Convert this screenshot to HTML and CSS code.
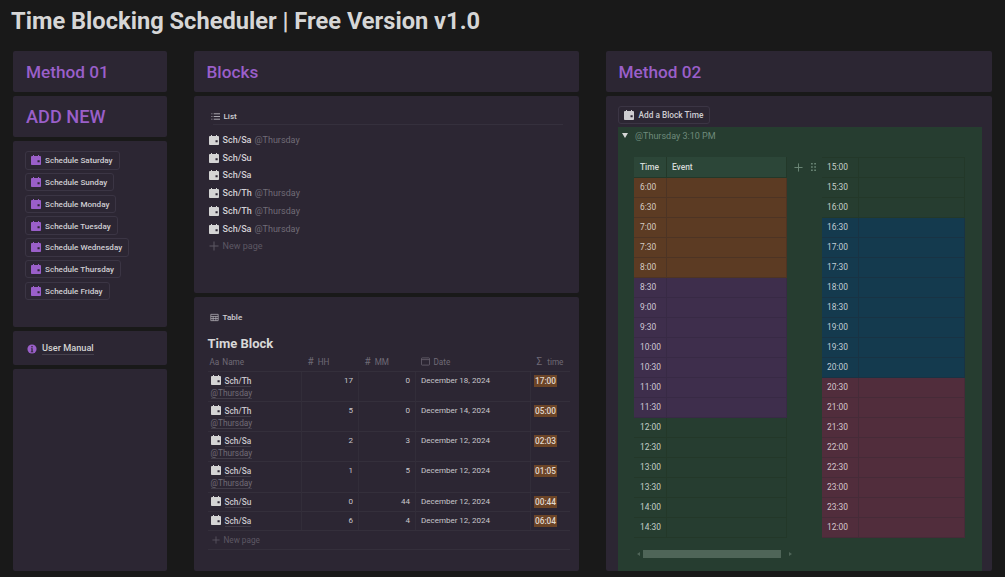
FILE: index.html
```html
<!DOCTYPE html>
<html lang="en">
<head>
<meta charset="utf-8">
<title>Time Blocking Scheduler</title>
<link rel="stylesheet" href="styles.css">
</head>
<body>
<svg class="defs" width="0" height="0" aria-hidden="true">
  <symbol id="cal" viewBox="0 0 12 12"><path fill="currentColor" fill-rule="evenodd" d="M2.4 0h1.2v1.2h4.8V0h1.2v1.2h1.1c.7 0 1.3.6 1.3 1.3v8.2c0 .7-.6 1.3-1.3 1.3H1.3C.6 12 0 11.4 0 10.700V2.500C0 1.800.6 1.200 1.300 1.200h1.100zM7.800 6.200v2.600h2.600V6.200z"/></symbol>
  <symbol id="plus" viewBox="0 0 10 10"><path fill="none" stroke="currentColor" stroke-width="1" d="M5 .5v9M.5 5h9"/></symbol>
</svg>
<h1 class="title">Time Blocking Scheduler | Free Version v1.0</h1>
<main class="columns">
  <section class="col">
    <div class="card head"><h2>Method 01</h2></div>
    <div class="card head"><h2 class="big">ADD NEW</h2></div>
    <div class="card buttons">
      <a class="btn"><svg class="ic"><use href="#cal"/></svg>Schedule Saturday</a>
      <a class="btn"><svg class="ic"><use href="#cal"/></svg>Schedule Sunday</a>
      <a class="btn"><svg class="ic"><use href="#cal"/></svg>Schedule Monday</a>
      <a class="btn"><svg class="ic"><use href="#cal"/></svg>Schedule Tuesday</a>
      <a class="btn"><svg class="ic"><use href="#cal"/></svg>Schedule Wednesday</a>
      <a class="btn"><svg class="ic"><use href="#cal"/></svg>Schedule Thursday</a>
      <a class="btn"><svg class="ic"><use href="#cal"/></svg>Schedule Friday</a>
    </div>
    <div class="card manual">
      <svg class="info" viewBox="0 0 12 12"><circle cx="6" cy="6" r="5.500" fill="#9a5fc9"/><circle cx="6" cy="3.300" r="1" fill="#2c2633"/><path d="M4.700 5h2.100v3.900h.7v.9H4.500v-.9h.8V5.800h-.6z" fill="#2c2633"/></svg>
      <span class="manual-text">User Manual</span>
    </div>
    <div class="card fill"></div>
  </section>

  <section class="col">
    <div class="card head"><h2>Blocks</h2></div>
    <div class="card list">
      <div class="tab">
        <svg class="tab-ic" viewBox="0 0 10 10"><path fill="none" stroke="currentColor" d="M3 2h7M3 5h7M3 8h7M.5 2h1M.5 5h1M.5 8h1"/></svg>List
      </div>
      <div class="row"><svg class="ic"><use href="#cal"/></svg><b>Sch/Sa</b><span class="dim">@Thursday</span></div>
      <div class="row"><svg class="ic"><use href="#cal"/></svg><b>Sch/Su</b></div>
      <div class="row"><svg class="ic"><use href="#cal"/></svg><b>Sch/Sa</b></div>
      <div class="row"><svg class="ic"><use href="#cal"/></svg><b>Sch/Th</b><span class="dim">@Thursday</span></div>
      <div class="row"><svg class="ic"><use href="#cal"/></svg><b>Sch/Th</b><span class="dim">@Thursday</span></div>
      <div class="row"><svg class="ic"><use href="#cal"/></svg><b>Sch/Sa</b><span class="dim">@Thursday</span></div>
      <div class="row new"><svg class="ic"><use href="#plus"/></svg>New page</div>
    </div>
    <div class="card db">
      <div class="tab">
        <svg class="tab-ic" viewBox="0 0 10 10"><path fill="none" stroke="currentColor" stroke-width=".8" d="M.9 1.500h8.200v7H.9zM.9 3.800h8.200M.9 6.200h8.200M3.500 3.800v4.700M6.500 3.800v4.700"/></svg>Table
      </div>
      <h3>Time Block</h3>
      <table class="data">
        <thead>
          <tr>
            <th class="c-name"><span class="aa">Aa</span>Name</th>
            <th class="c-num"><span class="hash">#</span>HH</th>
            <th class="c-num"><span class="hash">#</span>MM</th>
            <th class="c-date"><svg class="date-ic" viewBox="0 0 10 10"><path fill="none" stroke="currentColor" stroke-width=".8" d="M1.300 1h7.400q.8 0 .8.800v6.400q0 .8-.8.800H1.300q-.8 0-.8-.8V1.800q0-.8.800-.8zM.5 2.900h9"/></svg>Date</th>
            <th class="c-time"><span class="sigma">Σ</span>time</th>
          </tr>
        </thead>
        <tbody>
          <tr class="tall"><td><svg class="ic"><use href="#cal"/></svg><u>Sch/Th</u><br><u class="dim">@Thursday</u></td><td class="n">17</td><td class="n">0</td><td>December 18, 2024</td><td><span class="pill">17:00</span></td></tr>
          <tr class="tall"><td><svg class="ic"><use href="#cal"/></svg><u>Sch/Th</u><br><u class="dim">@Thursday</u></td><td class="n">5</td><td class="n">0</td><td>December 14, 2024</td><td><span class="pill">05:00</span></td></tr>
          <tr class="tall"><td><svg class="ic"><use href="#cal"/></svg><u>Sch/Sa</u><br><u class="dim">@Thursday</u></td><td class="n">2</td><td class="n">3</td><td>December 12, 2024</td><td><span class="pill">02:03</span></td></tr>
          <tr class="tall"><td><svg class="ic"><use href="#cal"/></svg><u>Sch/Sa</u><br><u class="dim">@Thursday</u></td><td class="n">1</td><td class="n">5</td><td>December 12, 2024</td><td><span class="pill">01:05</span></td></tr>
          <tr><td><svg class="ic"><use href="#cal"/></svg><u>Sch/Su</u></td><td class="n">0</td><td class="n">44</td><td>December 12, 2024</td><td><span class="pill">00:44</span></td></tr>
          <tr><td><svg class="ic"><use href="#cal"/></svg><u>Sch/Sa</u></td><td class="n">6</td><td class="n">4</td><td>December 12, 2024</td><td><span class="pill">06:04</span></td></tr>
        </tbody>
      </table>
      <div class="new-row"><svg class="ic"><use href="#plus"/></svg>New page</div>
    </div>
  </section>

  <section class="col">
    <div class="card head"><h2>Method 02</h2></div>
    <div class="card method">
      <a class="btn add"><svg class="ic"><use href="#cal"/></svg>Add a Block Time</a>
      <div class="callout">
        <div class="toggle"><span class="tri"></span><span>@Thursday 3:10 PM</span></div>
        <div class="tables">
          <div class="sheet left">
            <div class="tr hd"><span>Time</span><span>Event</span></div>
            <div class="tr brown"><span>6:00</span><span></span></div>
            <div class="tr brown"><span>6:30</span><span></span></div>
            <div class="tr brown"><span>7:00</span><span></span></div>
            <div class="tr brown"><span>7:30</span><span></span></div>
            <div class="tr brown"><span>8:00</span><span></span></div>
            <div class="tr purple"><span>8:30</span><span></span></div>
            <div class="tr purple"><span>9:00</span><span></span></div>
            <div class="tr purple"><span>9:30</span><span></span></div>
            <div class="tr purple"><span>10:00</span><span></span></div>
            <div class="tr purple"><span>10:30</span><span></span></div>
            <div class="tr purple"><span>11:00</span><span></span></div>
            <div class="tr purple"><span>11:30</span><span></span></div>
            <div class="tr"><span>12:00</span><span></span></div>
            <div class="tr"><span>12:30</span><span></span></div>
            <div class="tr"><span>13:00</span><span></span></div>
            <div class="tr"><span>13:30</span><span></span></div>
            <div class="tr"><span>14:00</span><span></span></div>
            <div class="tr"><span>14:30</span><span></span></div>
          </div>
          <div class="handles">
            <svg class="h-plus"><use href="#plus"/></svg>
            <svg class="h-grip" viewBox="0 0 6 10"><path fill="currentColor" d="M0 0h2v2H0zM4 0h2v2H4zM0 4h2v2H0zM4 4h2v2H4zM0 8h2v2H0zM4 8h2v2H4z"/></svg>
          </div>
          <div class="sheet right">
            <div class="tr"><span>15:00</span><span></span></div>
            <div class="tr"><span>15:30</span><span></span></div>
            <div class="tr"><span>16:00</span><span></span></div>
            <div class="tr blue"><span>16:30</span><span></span></div>
            <div class="tr blue"><span>17:00</span><span></span></div>
            <div class="tr blue"><span>17:30</span><span></span></div>
            <div class="tr blue"><span>18:00</span><span></span></div>
            <div class="tr blue"><span>18:30</span><span></span></div>
            <div class="tr blue"><span>19:00</span><span></span></div>
            <div class="tr blue"><span>19:30</span><span></span></div>
            <div class="tr blue"><span>20:00</span><span></span></div>
            <div class="tr red"><span>20:30</span><span></span></div>
            <div class="tr red"><span>21:00</span><span></span></div>
            <div class="tr red"><span>21:30</span><span></span></div>
            <div class="tr red"><span>22:00</span><span></span></div>
            <div class="tr red"><span>22:30</span><span></span></div>
            <div class="tr red"><span>23:00</span><span></span></div>
            <div class="tr red"><span>23:30</span><span></span></div>
            <div class="tr red"><span>12:00</span><span></span></div>
          </div>
        </div>
        <div class="scroll"><span class="arr l"></span><span class="thumb"></span><span class="arr r"></span></div>
      </div>
    </div>
  </section>
</main>
</body>
</html>
```
FILE: styles.css
```css
* { box-sizing: border-box; }
html, body { margin: 0; height: 577px; overflow: hidden; }
body {
  background: #191919;
  color: #d4d4d4;
  font-family: Roboto, "Noto Sans", sans-serif;
  padding: 0 13px 6px;
  display: flex;
  flex-direction: column;
}
.defs { position: absolute; }
.title {
  margin: 0 0 0 -2px;
  height: 51px;
  padding-top: 4px;
  font-size: 23.650px;
  line-height: 34px;
  font-weight: 700;
  color: #d6d6d6;
  white-space: nowrap;
}
.columns {
  flex: 1;
  min-height: 0;
  display: grid;
  grid-template-columns: 154px 385.500px 386.500px;
  column-gap: 26.500px;
}
.col { display: flex; flex-direction: column; gap: 4px; min-height: 0; }
.card { background: #2c2633; border-radius: 2px; }
.head { height: 41px; padding-left: 13px; display: flex; align-items: center; }
.head h2 { margin: 0; font-size: 17.200px; font-weight: 500; color: #9a5fc9; line-height: 24px; }
.head h2.big { font-size: 18.200px; }

.ic { width: 10px; height: 10px; flex: none; }
.buttons {
  height: 186px;
  padding: 10px 12px;
  display: flex;
  flex-direction: column;
  align-items: flex-start;
  gap: 3.250px;
}
.btn {
  height: 18.500px;
  display: flex;
  align-items: center;
  gap: 4px;
  padding: 0 6px 0 5px;
  border: 1px solid #3b3544;
  border-radius: 3px;
  font-size: 8.100px;
  font-weight: 500;
  color: #cfcdd2;
  white-space: nowrap;
}
.buttons .ic { color: #9a5fc9; }
.manual { height: 34px; display: flex; align-items: center; padding: 1px 0 0 14px; gap: 5px; }
.info { width: 10px; height: 10px; }
.manual-text { font-size: 9.200px; font-weight: 500; color: #d4d4d4; border-bottom: 1px solid #45404c; line-height: 12px; }
.fill { flex: 1; }

.list { height: 197px; padding: 12px 12px 0 15px; }
.tab {
  display: flex;
  align-items: center;
  gap: 4px;
  height: 16px;
  padding-left: 2px;
  font-size: 8.100px;
  font-weight: 500;
  color: #cfcdd2;
}
.tab-ic { width: 9px; height: 9px; color: #b9b6bd; }
.list .tab { box-shadow: 0 5px 0 -4px #35303d; }
.row {
  display: flex;
  align-items: center;
  height: 17.750px;
  font-size: 9px;
  gap: 4px;
  white-space: nowrap;
}
.list .tab + .row { margin-top: 7px; }
.row b { font-weight: 500; color: #d2d0d5; }
.row .dim { margin-left: -1px; }
.dim { color: #716c77; font-weight: 400; }
.row.new { color: #5d5864; }

.db { flex: 1; min-height: 0; padding: 12px 10px 0 14px; }
.db h3 { margin: 10px 0 0 0; font-size: 13px; font-weight: 700; line-height: 18px; color: #d8d8d8; }
.data { width: 362px; border-collapse: collapse; table-layout: fixed; font-size: 8px; }
.data th {
  height: 18px;
  padding: 0 0 0 2px;
  text-align: left;
  font-weight: 400;
  color: #6f6a76;
  font-size: 8.200px;
  white-space: nowrap;
}
.c-name { width: 94px; }
.c-num { width: 57px; padding-left: 6px !important; }
.c-date { width: 115px; padding-left: 5px !important; }
.c-time { padding-left: 6px !important; }
.aa { margin-right: 3px; }
.hash { font-size: 10px; margin-right: 4px; }
.sigma { font-size: 10px; margin-right: 5px; }
.date-ic { width: 9px; height: 9px; margin-right: 4px; vertical-align: -1px; }
.data td {
  border-top: 1px solid #342f3b;
  border-left: 1px solid #322d39;
  padding: 3px 5px 0 5px;
  vertical-align: top;
  height: 19.300px;
  line-height: 12px;
  color: #c9c7cc;
  white-space: nowrap;
}
.data tr.tall td { height: 30.300px; }
.data td:first-child { border-left: 0; padding-left: 3px; font-weight: 500; font-size: 8.300px; }
.data td:last-child { padding-left: 3px; }
.data tbody tr:last-child td { border-bottom: 1px solid #342f3b; }
.data u { text-decoration: none; border-bottom: 1px solid #413c48; }
.data .ic { vertical-align: -1px; margin: -2px 4px 0 0; color: #d4d4d4; }
.n { text-align: right; }
.pill { display: inline-block; background: #6b4427; padding: 0 1px; font-weight: 500; color: #e0d8cf; line-height: 12px; font-size: 8.300px; }
.new-row { display: flex; align-items: center; gap: 4px; height: 19px; padding-left: 4px; font-size: 8.200px; color: #5d5864; border-bottom: 1px solid #342f3b; width: 362px; }
.new-row .ic { width: 8px; height: 8px; }

.method { flex: 1; min-height: 0; padding: 10px 10px 0 12px; display: flex; flex-direction: column; }
.add { align-self: flex-start; margin-bottom: 3px; height: 18px; gap: 5px; padding: 0 6px 0 5px; font-size: 8.300px; }
.callout { flex: 1; min-height: 0; background: #263d30; padding: 0 0 0 16.500px; }
.toggle { margin-left: -12px; padding-top: 1px; display: flex; align-items: center; gap: 7px; height: 16px; font-size: 9px; color: #6f8b7b; }
.tri { width: 0; height: 0; border-left: 3.500px solid transparent; border-right: 3.500px solid transparent; border-top: 5px solid #d6d6d6; }
.tables { display: flex; align-items: flex-start; margin-top: 14px; }
.sheet { display: flex; flex-direction: column; }
.left { width: 153px; }
.right { width: 143px; border-top: 1px solid #233829; }
.handles { width: 35px; height: 20px; display: flex; align-items: center; gap: 8px; padding-left: 7px; color: #6f8b7b; }
.h-plus { width: 9px; height: 9px; }
.h-grip { width: 5px; height: 8px; }
.tr {
  height: 20px;
  display: grid;
  grid-template-columns: 32px 1fr;
  border-bottom: 1px solid #233829;
  border-right: 1px solid #233829;
  font-size: 8.400px;
  line-height: 19px;
  color: #c4cfc8;
}
.right .tr { grid-template-columns: 36px 1fr; }
.tr span { padding-left: 5px; border-left: 1px solid transparent; }
.right .tr span { padding-left: 4px; }
.tr span + span { border-left: 1px solid #233829; }
.hd { background: #2c4638; height: 21px; font-weight: 500; line-height: 20px; color: #d4d9d6; }
.brown { background: #5c3b23; border-color: #4d3424; color: #d6cbc2; }
.brown span + span { border-left-color: #4d3424; }
.purple { background: #3e2e4c; border-color: #382a45; color: #cfc8d6; }
.purple span + span { border-left-color: #382a45; }
.blue { background: #143a4e; border-color: #183344; color: #c0cdd4; }
.blue span + span { border-left-color: #183344; }
.red { background: #512d3c; border-color: #462b38; color: #d6c6cc; }
.red span + span { border-left-color: #462b38; }
.scroll { display: flex; align-items: center; height: 8px; margin: 12px 0 0 3px; width: 155px; gap: 3px; }
.thumb { width: 139px; height: 8px; background: #4f6558; }
.arr { width: 0; height: 0; border-top: 2.500px solid transparent; border-bottom: 2.500px solid transparent; }
.arr.l { border-right: 3px solid #4f6558; }
.arr.r { border-left: 3px solid #4f6558; margin-left: 5px; }
```
